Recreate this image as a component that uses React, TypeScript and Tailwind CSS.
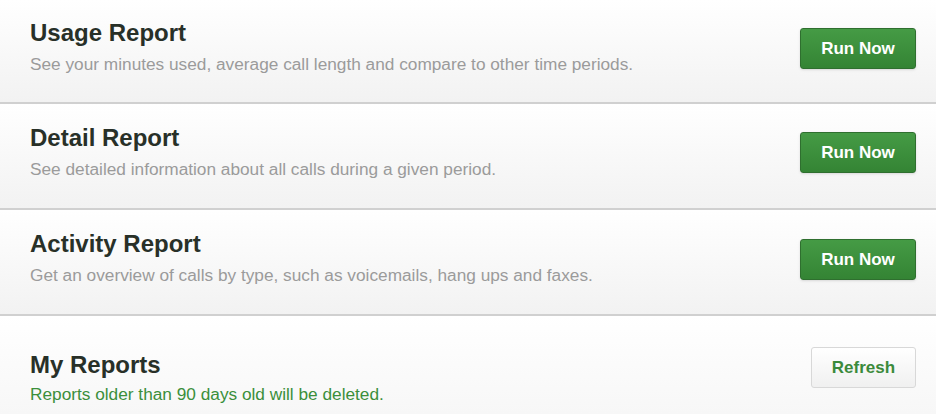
const reports = [
  {
    title: 'Usage Report',
    description: 'See your minutes used, average call length and compare to other time periods.',
    row: 'h-[104px]',
    text: 'pt-[19px]',
    button: 'mt-[28px]',
  },
  {
    title: 'Detail Report',
    description: 'See detailed information about all calls during a given period.',
    row: 'h-[106px]',
    text: 'pt-[20px]',
    button: 'mt-[28px]',
  },
  {
    title: 'Activity Report',
    description: 'Get an overview of calls by type, such as voicemails, hang ups and faxes.',
    row: 'h-[106px]',
    text: 'pt-[20px]',
    button: 'mt-[29px]',
  },
];

const App = () => {
  return (
    <div className="w-[936px] h-[416px] overflow-hidden bg-white font-['Liberation_Sans',Arial,sans-serif]">
      {reports.map((report) => (
        <div
          key={report.title}
          className={`${report.row} flex items-start justify-between pl-[30px] pr-[20px] border-b-2 border-[#d0d0d0] bg-gradient-to-b from-white to-[#f2f2f2]`}
        >
          <div className={`flex flex-col ${report.text}`}>
            <h2 className="text-[24px] leading-[28px] font-bold text-[#283028]">{report.title}</h2>
            <p className="mt-[7px] text-[17.25px] leading-[20px] text-[#9b9b9b]">{report.description}</p>
          </div>
          <button
            className={`${report.button} w-[116px] h-[41px] rounded-[3px] border border-[#2f6f2f] bg-gradient-to-b from-[#459b45] to-[#348434] text-white text-[17px] font-bold shadow-sm`}
          >
            Run Now
          </button>
        </div>
      ))}
      <div className="h-[98px] flex items-start justify-between pl-[30px] pr-[20px] bg-gradient-to-b from-white to-[#f7f7f7]">
        <div className="flex flex-col pt-[35px]">
          <h2 className="text-[24px] leading-[28px] font-bold text-[#283028]">My Reports</h2>
          <p className="mt-[5px] text-[17.25px] leading-[20px] text-[#3b8f3b]">Reports older than 90 days old will be deleted.</p>
        </div>
        <button className="mt-[31px] w-[105px] h-[41px] rounded-[3px] border border-[#d8d8d8] bg-gradient-to-b from-white to-[#f0f0f0] text-[#3b8a3b] text-[17px] font-bold">
          Refresh
        </button>
      </div>
    </div>
  );
};

export default App;
